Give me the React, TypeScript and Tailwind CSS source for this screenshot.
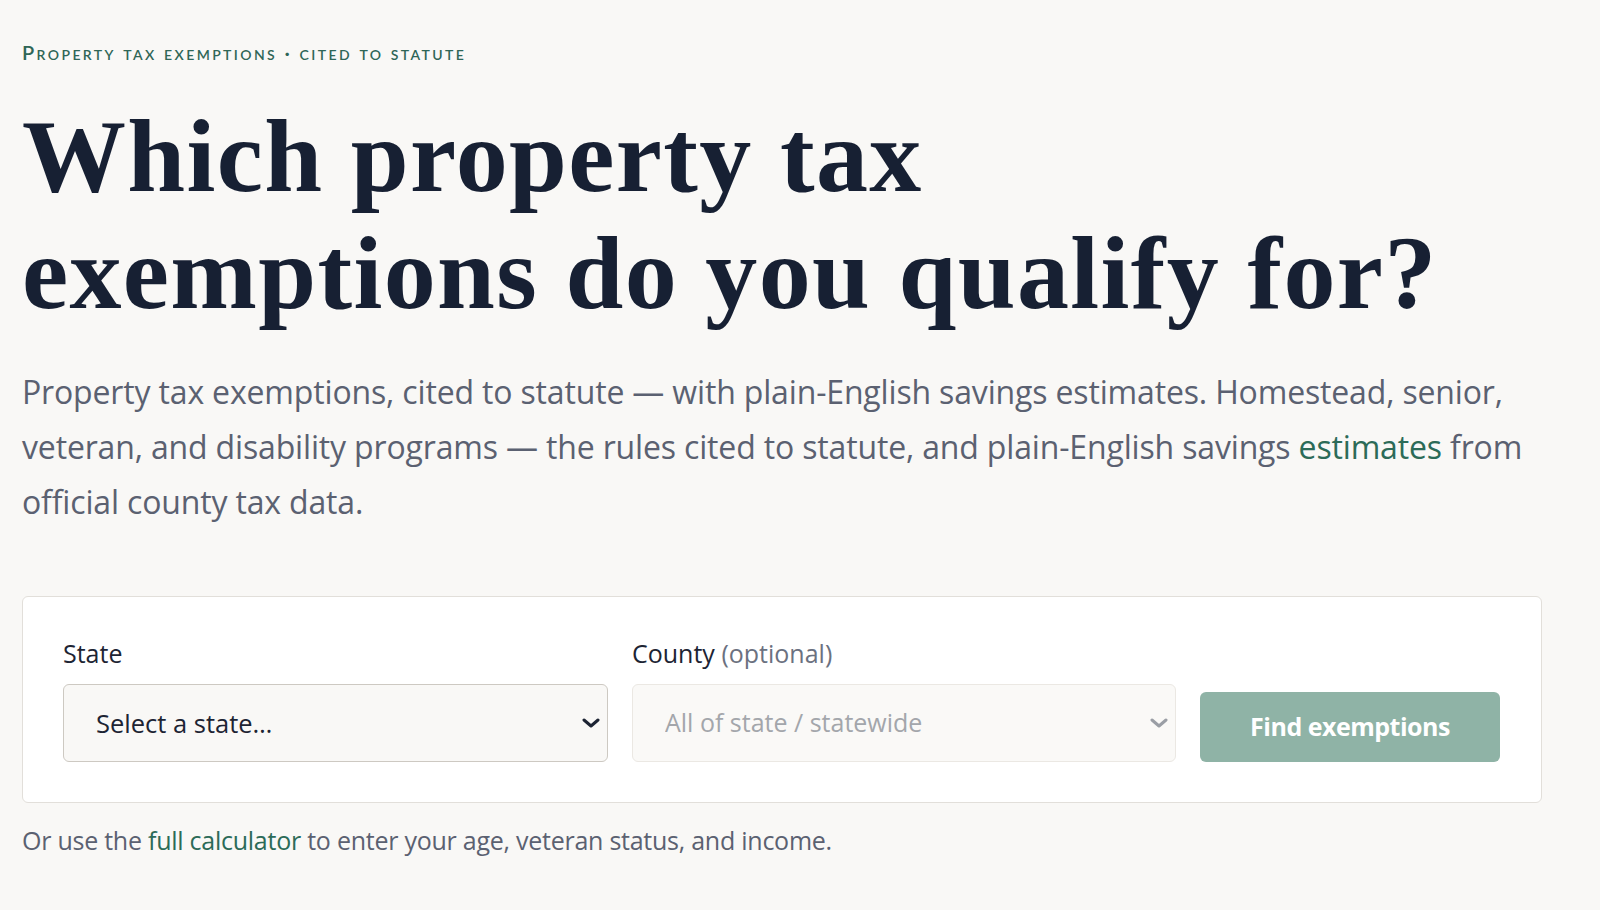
import React from "react";

function Chevron({ className }: { className?: string }) {
  return (
    <svg viewBox="0 0 18 10" className={className} fill="none">
      <path d="M2 2l7 6 7-6" stroke="currentColor" strokeWidth="3" strokeLinecap="round" strokeLinejoin="round" />
    </svg>
  );
}

export default function App() {
  return (
    <div className="min-h-screen bg-[#f9f8f6] font-['Open_Sans',sans-serif]">
      <main className="w-[1520px] ml-[22px] pt-[38px]">
        <p className="font-['Lato',sans-serif] text-[20px] leading-[28px] font-semibold tracking-[0.12em] text-[#2f6657] [font-variant:small-caps]">
          Property tax exemptions · cited to statute
        </p>

        <h1 className="mt-[31px] font-['Liberation_Serif',serif] font-bold text-[104px] leading-[117px] tracking-[1.35px] text-[#172033]">
          Which property tax
          <br />
          exemptions do you qualify for?
        </h1>

        <p className="mt-[33px] w-[1560px] text-[32px] leading-[55px] tracking-[-0.005em] text-[#5b6171]">
          Property tax exemptions, cited to statute — with plain-English savings estimates. Homestead, senior,
          <br />
          veteran, and disability programs — the rules cited to statute, and plain-English savings{" "}
          <span className="text-[#2c6b58]">estimates</span> from
          <br />
          official county tax data.
        </p>

        <section className="mt-[67px] rounded-md border border-[#e2dfda] bg-white p-10">
          <div className="flex items-end gap-6">
            <div className="w-[545px]">
              <label className="block text-[25px] leading-[32px] text-[#1d2433]">State</label>
              <div className="relative mt-[15px]">
                <select className="h-[78px] w-full appearance-none rounded-md border border-[#cdc9c2] bg-[#f9f8f6] pl-8 pr-12 text-[25.5px] text-[#1d2433] outline-none">
                  <option>Select a state…</option>
                </select>
                <Chevron className="pointer-events-none absolute right-[8px] top-[34px] h-[10px] w-[18px] text-[#1d2433]" />
              </div>
            </div>

            <div className="w-[544px]">
              <label className="block text-[25px] leading-[32px] text-[#1d2433]">
                County <span className="text-[#6b7180]">(optional)</span>
              </label>
              <div className="relative mt-[15px]">
                <select
                  disabled
                  className="h-[78px] w-full appearance-none rounded-md border border-[#ebe8e3] bg-[#faf9f7] pl-8 pr-12 text-[25px] text-[#a3a6ab] outline-none"
                >
                  <option>All of state / statewide</option>
                </select>
                <Chevron className="pointer-events-none absolute right-[8px] top-[34px] h-[10px] w-[18px] text-[#9a9ea5]" />
              </div>
            </div>

            <button
              disabled
              className="h-[70px] w-[300px] rounded-md bg-[#8fb3a6] text-[25px] font-bold tracking-[-0.02em] text-white"
            >
              Find exemptions
            </button>
          </div>
        </section>

        <p className="mt-[20px] text-[25px] leading-[34px] tracking-[-0.01em] text-[#5b6171]">
          Or use the <span className="text-[#2c6b58]">full calculator</span> to enter your age, veteran status, and
          income.
        </p>
      </main>
    </div>
  );
}
